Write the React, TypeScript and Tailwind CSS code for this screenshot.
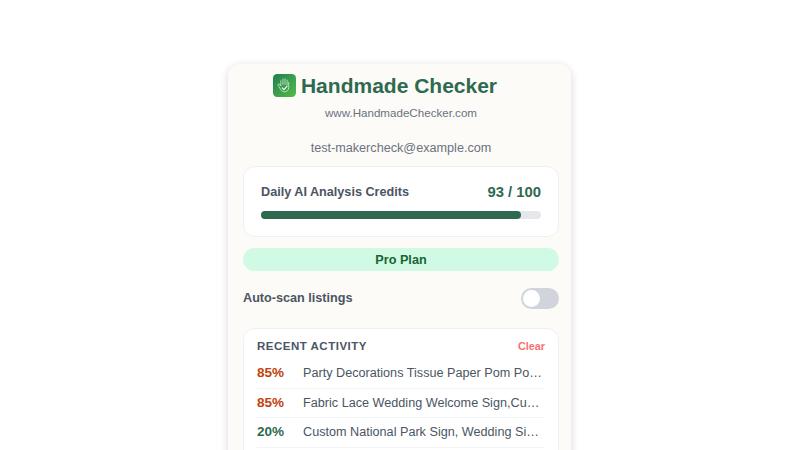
const activity = [
  { score: '85%', title: 'Party Decorations Tissue Paper Pom Poms, Wedding', color: 'text-[#c2410c]' },
  { score: '85%', title: 'Fabric Lace Wedding Welcome Sign,Custom Banner', color: 'text-[#c2410c]' },
  { score: '20%', title: 'Custom National Park Sign, Wedding Sign Decor', color: 'text-[#2d6a4f]' },
];

const Logo = () => (
  <svg viewBox="0 0 22 22" className="h-[23px] w-[23px] shrink-0" fill="none">
    <defs>
      <linearGradient id="logoBg" x1="0" y1="0" x2="1" y2="1">
        <stop offset="0" stopColor="#1f7f50" />
        <stop offset="1" stopColor="#55bb4a" />
      </linearGradient>
    </defs>
    <rect width="22" height="22" rx="4" fill="url(#logoBg)" />
    <path
      d="M7.500 11V6.500M9.500 10V4.800M11.500 10V4.600M13.500 10.500V5.800M7.500 11 6 9.800c-.8-.6-1.600.2-1.100 1l2.400 4c.8 1.300 1.900 2.200 3.700 2.200 2.600 0 4-1.700 4-4V8"
      stroke="#cdeccb"
      strokeWidth="0.8"
      strokeLinecap="round"
      strokeLinejoin="round"
    />
    <path d="m8.800 13.200 1.700 1.700 3-3.200" stroke="#ffffff" strokeWidth="1" strokeLinecap="round" strokeLinejoin="round" />
  </svg>
);

export default function App() {
  return (
    <div className="h-[450px] overflow-hidden bg-white font-['Liberation_Sans',Arial,sans-serif]">
      <div className="ml-[228px] mt-16 w-[343px] rounded-xl bg-[#fdfbf7] pb-4 pl-[15px] pr-[12px] pt-[9px] shadow-[0_2px_8px_rgba(0,0,0,0.16)]">
        {/* Header */}
        <div className="flex items-center justify-center gap-[5px] pr-[32px]">
          <Logo />
          <h1 className="text-[21px] font-bold leading-[25px] text-[#2d6a4f]">Handmade Checker</h1>
        </div>
        <p className="mt-[8px] text-center text-[11.6px] leading-[13px] text-[#6b7280]">www.HandmadeChecker.com</p>
        <p className="mt-[21px] text-center text-[12.65px] leading-4 text-[#6b7280]">test-makercheck@example.com</p>

        {/* Credits */}
        <div className="mt-[10px] rounded-xl border border-[#f0f0f0] bg-white px-[17px] pb-[17px] pt-4">
          <div className="flex items-center justify-between">
            <span className="text-[12.65px] font-bold leading-[18px] text-[#4b5563]">Daily AI Analysis Credits</span>
            <span className="text-[14.8px] font-bold leading-[18px] text-[#2d6a4f]">93 / 100</span>
          </div>
          <div className="mt-[10px] h-2 rounded-full bg-[#e5e7eb]">
            <div className="h-2 w-[93%] rounded-full bg-[#2d6a4f]" />
          </div>
        </div>

        <div className="mt-[11px] rounded-full bg-[#d1fae5] pb-[3px] pt-[5px] text-center text-[12.65px] font-bold leading-[15px] text-[#166534]">
          Pro Plan
        </div>

        {/* Auto-scan */}
        <div className="mt-[17px] flex items-center justify-between">
          <span className="text-[12.65px] font-bold text-[#4b5563]">Auto-scan listings</span>
          <div className="flex h-[21px] w-[38px] items-center rounded-full bg-[#d1d5db] px-[2px]">
            <div className="h-[17px] w-[17px] rounded-full bg-white" />
          </div>
        </div>

        {/* Recent activity */}
        <div className="mt-[19px] rounded-xl border border-[#f0f0f0] bg-white px-[13px] pb-3 pt-[11px]">
          <div className="flex items-center justify-between">
            <span className="text-[11.5px] font-bold uppercase leading-[13px] tracking-[0.5px] text-[#4b5563]">Recent Activity</span>
            <span className="text-[10.8px] font-bold leading-[13px] text-[#f87171]">Clear</span>
          </div>
          <div className="mt-[6px]">
            {activity.map((row) => (
              <div key={row.title} className="flex items-center border-b border-[#f3f4f6] py-[6px]">
                <span className={`w-[46px] shrink-0 text-[13.500px] font-bold leading-[16.500px] ${row.color}`}>{row.score}</span>
                <span className="truncate pr-[3px] text-[12.65px] leading-[16.500px] text-[#4b5563]">{row.title}</span>
              </div>
            ))}
          </div>
        </div>
      </div>
    </div>
  );
}
